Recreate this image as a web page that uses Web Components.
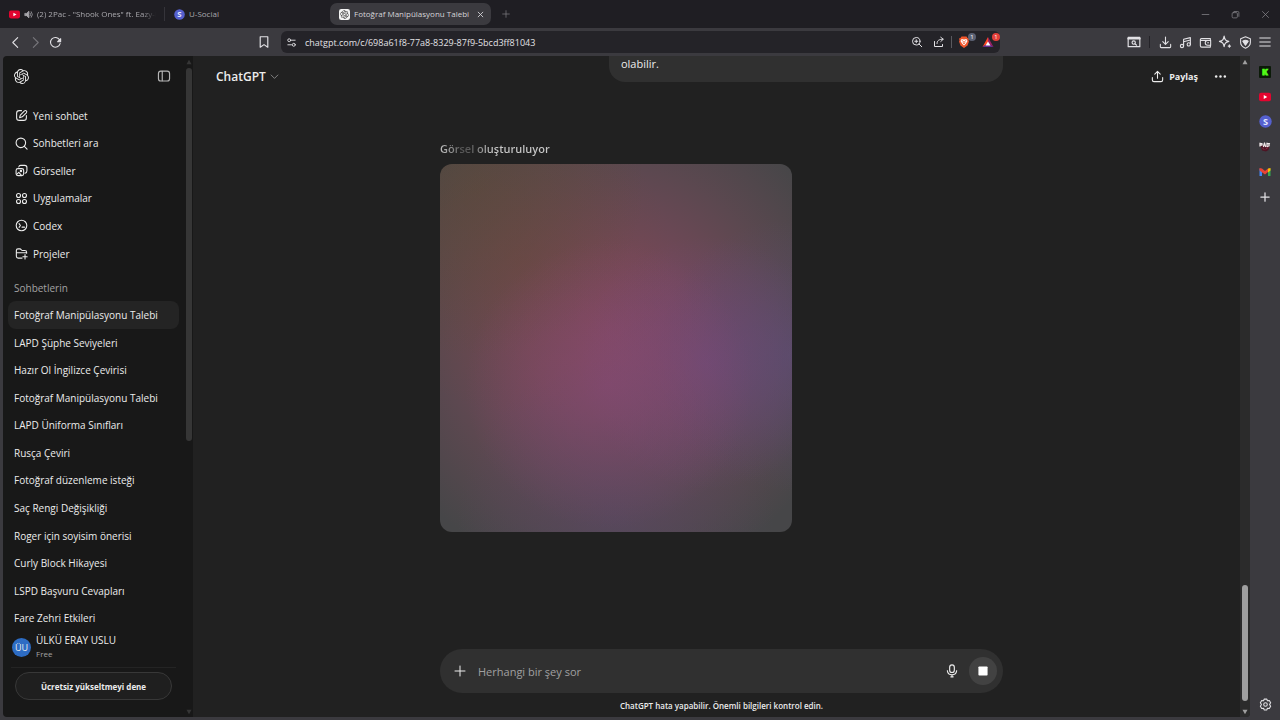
<!DOCTYPE html>
<html lang="tr">
<head>
<meta charset="utf-8">
<meta name="viewport" content="width=device-width, initial-scale=1">
<title>Fotoğraf Manipülasyonu Talebi</title>
<style>
	html, body {
		height: 100%;
		margin: 0;
	}

	body {
		background: #3b3a3f;
		color: #ececec;
		font-family: "Open Sans", "Noto Sans", sans-serif;
		font-size: 10px;
		overflow: hidden;
	}
</style>
</head>
<body>
<browser-window></browser-window>

<script>
const BASE = `
	* {
		box-sizing: border-box;
	}

	button, input, h2, p, hr {
		margin: 0;
		padding: 0;
	}

	button, input {
		font: inherit;
		color: inherit;
		background: none;
		border: 0;
		outline: 0;
	}

	a {
		color: inherit;
		text-decoration: none;
	}

	button {
		display: flex;
		align-items: center;
		justify-content: center;
	}
`;

const OPENAI = "M22.2819 9.8211a5.9847 5.9847 0 0 0-.5157-4.9108 6.0462 6.0462 0 0 0-6.5098-2.9A6.0651 6.0651 0 0 0 4.9807 4.1818a5.9847 5.9847 0 0 0-3.9977 2.9 6.0462 6.0462 0 0 0 .7427 7.0966 5.98 5.98 0 0 0 .511 4.9107 6.051 6.051 0 0 0 6.5146 2.9001A5.9847 5.9847 0 0 0 13.2599 24a6.0557 6.0557 0 0 0 5.7718-4.2058 5.9894 5.9894 0 0 0 3.9977-2.9001 6.0557 6.0557 0 0 0-.7475-7.0729zm-9.022 12.6081a4.4755 4.4755 0 0 1-2.8764-1.0408l.1419-.0804 4.7783-2.7582a.7948.7948 0 0 0 .3927-.6813v-6.7369l2.02 1.1686a.071.071 0 0 1 .038.052v5.5826a4.504 4.504 0 0 1-4.4945 4.4944zm-9.6607-4.1254a4.4708 4.4708 0 0 1-.5346-3.0137l.142.0852 4.783 2.7582a.7712.7712 0 0 0 .7806 0l5.8428-3.3685v2.3324a.0804.0804 0 0 1-.0332.0615L9.74 19.9502a4.4992 4.4992 0 0 1-6.1408-1.6464zM2.3408 7.8956a4.485 4.485 0 0 1 2.3655-1.9728V11.6a.7664.7664 0 0 0 .3879.6765l5.8144 3.3543-2.0201 1.1685a.0757.0757 0 0 1-.071 0l-4.8303-2.7865A4.504 4.504 0 0 1 2.3408 7.872zm16.5963 3.8558L13.1038 8.364 15.1192 7.2a.0757.0757 0 0 1 .071 0l4.8303 2.7913a4.4944 4.4944 0 0 1-.6765 8.1042v-5.6772a.79.79 0 0 0-.407-.667zm2.0107-3.0231l-.142-.0852-4.7735-2.7818a.7759.7759 0 0 0-.7854 0L9.409 9.2297V6.8974a.0662.0662 0 0 1 .0284-.0615l4.8303-2.7866a4.4992 4.4992 0 0 1 6.6802 4.66zM8.3065 12.863l-2.02-1.1638a.0804.0804 0 0 1-.038-.0567V6.0742a4.4992 4.4992 0 0 1 7.3757-3.4537l-.142.0805L8.704 5.459a.7948.7948 0 0 0-.3927.6813zm1.0976-2.3654l2.602-1.4998 2.6069 1.4998v2.9994l-2.5974 1.4997-2.6067-1.4997Z";

// all icons share a 24x24 box
const ICONS = {
	back: `<path d="M16 3 7 12l9 9"/>`,
	forward: `<path d="m8 3 9 9-9 9"/>`,
	reload: `<path d="M20.500 14a9 9 0 1 1-1-7"/><path d="M21.500 5v5.500h-5.500z" fill="currentColor"/>`,
	bookmark: `<path d="M5.500 3h13v18L12 16.500 5.500 21z"/>`,
	tune: `<circle cx="7" cy="7" r="3.200"/><path d="M12 7h8"/><circle cx="17" cy="17" r="3.200"/><path d="M4 17h8"/>`,
	zoom: `<circle cx="10.500" cy="10.500" r="7.500"/><path d="m16 16 5.500 5.500M10.500 7.500v6M7.500 10.500h6"/>`,
	send: `<path d="M3 11v10h16v-4M8 15c0-6 4-8.500 12-8.500M15.500 2.500l5 4-5 4.500"/>`,
	sidesearch: `<path d="M2 4h20v16H2z"/><path d="M2 6h20" stroke-width="3"/><circle cx="11.500" cy="13" r="2.800"/><path d="m14 15.500 2.500 2"/>`,
	download: `<path d="M12 2v13M7 10.500l5 5 5-5M2.500 15.500V20q0 1.500 1.500 1.500h16q1.500 0 1.500-1.500v-4.500"/>`,
	music: `<circle cx="5.500" cy="18.500" r="3"/><circle cx="18" cy="15.500" r="3"/><path d="M8.500 18.500V6L21 3v12.500M8.500 10.500 21 7.500"/>`,
	wallet: `<path d="M21 8V4.500H4.500a2 2 0 0 0-2 2V18a2.500 2.500 0 0 0 2.500 2.500h16V17M3 8h18.500v9H16a4.500 4.500 0 0 1 0-9M16 12.500h1.500"/>`,
	spark: `<path d="M10.500 2c1 6 2.500 7.500 8 9-5.500 1.500-7 3-8 9-1-6-2.500-7.500-8-9 5.500-1.500 7-3 8-9z"/><path d="M19.500 17v4M17.500 19h4"/>`,
	shield: `<path d="M12 1.500 21 5v7c0 5-4 8.500-9 10.500C7 20.500 3 17 3 12V5z"/><path d="M7 9.500q5-3.500 10 0L12 17z" fill="currentColor"/>`,
	menu: `<path d="M1.500 4h21M1.500 12h21M1.500 20h21"/>`,
	minimize: `<path d="M3 12h18"/>`,
	restore: `<rect x="3" y="7" width="14" height="14" rx="3"/><path d="M8 4h10q3 0 3 3v10"/>`,
	close: `<path d="m4 4 16 16M20 4 4 20"/>`,
	plus: `<path d="M12 2v20M2 12h20"/>`,
	speaker: `<path d="M3 9h4l6-6v18l-6-6H3z" fill="currentColor"/><path d="M16.500 8q3 4 0 8M19.500 4.500q6 7.500 0 15"/>`,
	chevron: `<path d="m3 8 9 9 9-9"/>`,
	panel: `<rect x="2.500" y="3.500" width="19" height="17" rx="4"/><path d="M9 4v16"/>`,
	compose: `<path d="M12 3H8a5 5 0 0 0-5 5v8a5 5 0 0 0 5 5h8a5 5 0 0 0 5-5v-4"/><path d="M17.500 3.500q2-1.500 3.500 0t0 3.500L13.500 14.500 8.500 16l1.300-4.800z"/>`,
	search: `<circle cx="10.800" cy="10.800" r="8.800"/><path d="m17.300 17.300 5 5"/>`,
	images: `<rect x="2" y="8.500" width="14" height="13" rx="3.500"/><path d="M7 5.500q.500-3 3.500-3H18q4 0 4 4v6q0 4-3.500 4.500M3 19l4-3.500 5 5.500"/><circle cx="11" cy="13" r="1.300"/>`,
	apps: `<circle cx="6.500" cy="6.500" r="3.700"/><circle cx="17.500" cy="6.500" r="3.700"/><circle cx="6.500" cy="17.500" r="3.700"/><circle cx="17.500" cy="17.500" r="3.700"/>`,
	codex: `<circle cx="12" cy="12" r="9.800"/><path d="m7.500 8.500 2.500 3.500-2.500 3.500M13 15h4.500"/>`,
	folder: `<path d="M13 20.500H6q-3.500 0-3.500-3.500V6.500Q2.500 3.500 5.500 3.500H9q1.500 0 2.500 1.500t2.500 1.500h4q3.500 0 3.500 3.500v1.500M2.500 10.500h18M18.500 14v8M14.500 18h8"/>`,
	share: `<path d="M12 15V2.500M7 7.500l5-5 5 5M2.500 14v4.500q0 3 3 3h13q3 0 3-3V14"/>`,
	dots: `<g fill="currentColor" stroke="none"><circle cx="4" cy="12" r="2.300"/><circle cx="12" cy="12" r="2.300"/><circle cx="20" cy="12" r="2.300"/></g>`,
	mic: `<rect x="8" y="1.500" width="8" height="13" rx="4"/><path d="M4 11.500q1 7 8 7t8-7M12 18.500V22M10 22h4"/>`,
	stop: `<rect x="1" y="1" width="22" height="22" rx="2" fill="currentColor" stroke="none"/>`,
	gear: `<path d="M9.500 2h5l1 3 3.500-.500 2.500 4.300L19.500 12l2 3.200-2.500 4.300-3.500-.500-1 3h-5l-1-3-3.500.500-2.500-4.300L4.500 12l-2-3.200L5 4.500l3.500.500z"/><circle cx="12" cy="12" r="3.300"/>`,
	up: `<path d="M12 3 22 21H2z" fill="currentColor" stroke="none"/>`,
	down: `<path d="M12 21 2 3h20z" fill="currentColor" stroke="none"/>`,
	openai: `<path d="${OPENAI}" fill="currentColor" stroke="none"/>`,
	openaitab: `<rect width="24" height="24" rx="5" fill="#f4f4f4" stroke="none"/><path transform="translate(3 3) scale(.75)" d="${OPENAI}" fill="#333" stroke="none"/>`,
	youtube: `<rect y="3.500" width="24" height="17" rx="4" fill="#e3042f" stroke="none"/><path d="m9.500 8 7 4-7 4z" fill="#fff" stroke="none"/>`,
	usocial: `<circle cx="12" cy="12" r="11.500" fill="#5560cf" stroke="none"/><text x="12" y="18" text-anchor="middle" font-size="17" font-weight="700" fill="#e6e9ff" stroke="none">S</text>`,
	kick: `<rect width="24" height="24" rx="2" fill="#0b1a08" stroke="none"/><text x="12" y="18" text-anchor="middle" font-size="17" font-weight="800" fill="#53fc18" stroke="#53fc18" stroke-width="1.500" stroke-linejoin="miter">K</text>`,
	forum: `<path d="M3 9h18l-2 9-5 3-8-2z" fill="#4e1424" stroke="none"/><path d="M2 4v6M2 5h4v3H2M9 11l2-7 2 7M16 4v7M16 5h5M20 5v5l-3 1" stroke="#f1e9ea" stroke-width="2.500"/><path d="m7 14 3 3M14 16l4-3" stroke="#8a3045"/>`,
	gmail: `<path d="M1 5v15h5V10z" fill="#4285f4" stroke="none"/><path d="M23 5v15h-5V10z" fill="#34a853" stroke="none"/><path d="m18 5 5-1v5l-5 4z" fill="#fbbc04" stroke="none"/><path d="m1 4 5 1 6 5 6-5v7l-6 5L1 9z" fill="#ea4335" stroke="none"/>`,
	brave: `<path d="M7 1h10l2 3 3 1-1 4 1 2-3 8-7 5-7-5-3-8 1-2-1-4 3-1z" fill="#f1562b" stroke="none"/><path d="m7 6 5 1 5-1 2 4-3 5-4 4-4-4-3-5z" fill="#fff" stroke="none"/><path d="m8 9 3 2-1 3 2 2 2-2-1-3 3-2" stroke="#f1562b" stroke-width="1.500"/>`,
	bat: `<path d="M12 2 1 22l11-7z" fill="#ff4724"/><path d="m12 2 11 20-11-7z" fill="#9e1f63"/><path d="m1 22 11-7 11 7z" fill="#662d91"/><path d="m12 11 5 8H7z" fill="#fff"/>`,
};

class UiIcon extends HTMLElement {
	connectedCallback() {
		const size = this.getAttribute("size") || 14;
		const weight = this.getAttribute("weight") || 2;
		this.attachShadow({mode: "open"}).innerHTML = `
		<style>
			:host {
				display: block;
				flex: none;
				width: ${size}px;
				height: ${size}px;
			}

			svg {
				display: block;
			}
		</style>
		<svg width="${size}" height="${size}" viewBox="0 0 24 24" fill="none" stroke="currentColor" stroke-width="${weight}" stroke-linecap="round" stroke-linejoin="round" aria-hidden="true">${ICONS[this.getAttribute("name")]}</svg>`;
	}
}

class BrowserTab extends HTMLElement {
	connectedCallback() {
		this.attachShadow({mode: "open"}).innerHTML = `
		<style>
			${BASE}
			:host {
				display: flex;
				align-items: center;
				gap: 4px;
				width: 165px;
				height: 22px;
				padding: 0 7px 0 9px;
				color: #a9a8ad;
				font-size: 8px;
				line-height: 14px;
				border-radius: 7px;
			}

			:host([active]) {
				width: 161px;
				color: #d5d4d8;
				background: #3b3a3f;
			}

			:host([divided]) {
				border-radius: 0;
			}

			.title {
				flex: 1;
				overflow: hidden;
				white-space: nowrap;
			}

			:host([divided]) .title {
				margin-right: 4px;
				-webkit-mask-image: linear-gradient(to right, #000 88%, transparent);
				mask-image: linear-gradient(to right, #000 88%, transparent);
			}

			.edge {
				width: 1px;
				height: 14px;
				margin-right: -7px;
				background: #35343a;
			}

			button {
				width: 8px;
			}
		</style>
		<slot name="icon"></slot>
		<span class="title"><slot></slot></span>
		${this.hasAttribute("divided") ? `<span class="edge"></span>` : ""}
		${this.hasAttribute("active") ? `<button aria-label="Sekmeyi kapat"><ui-icon name="close" size="7" weight="3"></ui-icon></button>` : ""}`;
	}
}

class TabStrip extends HTMLElement {
	connectedCallback() {
		this.attachShadow({mode: "open"}).innerHTML = `
		<style>
			${BASE}
			:host {
				display: flex;
				align-items: center;
				height: 28px;
				background: #1f1e23;
				color: #85848a;
			}

			button {
				width: 30px;
				height: 22px;
			}

			.controls {
				display: flex;
				margin-left: auto;
			}
		</style>
		<browser-tab divided>
			<ui-icon slot="icon" name="youtube" size="11"></ui-icon>
			<ui-icon slot="icon" name="speaker" size="9"></ui-icon>
			(2) 2Pac - "Shook Ones" ft. Eazy-E
		</browser-tab>
		<browser-tab>
			<ui-icon slot="icon" name="usocial" size="11"></ui-icon>
			U-Social
		</browser-tab>
		<browser-tab active>
			<ui-icon slot="icon" name="openaitab" size="11"></ui-icon>
			Fotoğraf Manipülasyonu Talebi
		</browser-tab>
		<button aria-label="Yeni sekme"><ui-icon name="plus" size="8"></ui-icon></button>
		<div class="controls">
			<button aria-label="Küçült"><ui-icon name="minimize" size="9"></ui-icon></button>
			<button aria-label="Geri yükle"><ui-icon name="restore" size="9"></ui-icon></button>
			<button aria-label="Kapat"><ui-icon name="close" size="9"></ui-icon></button>
		</div>`;
	}
}

class BrowserToolbar extends HTMLElement {
	connectedCallback() {
		this.attachShadow({mode: "open"}).innerHTML = `
		<style>
			${BASE}
			:host {
				display: flex;
				align-items: center;
				height: 28px;
				background: #3b3a3f;
				color: #e2e1e5;
			}

			button {
				flex: none;
				width: 20px;
				height: 20px;
			}

			.left, .right {
				display: flex;
				flex: 0 0 281px;
				align-items: center;
				padding: 0 7px 0 5px;
			}

			.left button:last-child {
				margin-left: auto;
			}

			.right {
				flex-basis: 280px;
				justify-content: flex-end;
				padding: 0 5px 0 0;
			}

			.dim {
				color: #77767b;
			}

			.address {
				display: flex;
				flex: 1;
				align-items: center;
				height: 22px;
				background: #242328;
				border-radius: 6px;
			}

			.address input {
				flex: 1;
				min-width: 0;
				height: 20px;
				margin-left: 4px;
				font-size: 9px;
			}

			.wide {
				width: 24px;
			}

			.divider {
				width: 1px;
				height: 12px;
				background: #5a595e;
			}

			.right .divider {
				margin: 0 5px;
				background: #242328;
			}

			.badged {
				position: relative;
			}

			.badged span {
				position: absolute;
				top: 1px;
				right: 0;
				width: 8px;
				height: 8px;
				border-radius: 4px;
				background: #5b6173;
				color: #fff;
				font-size: 6px;
				line-height: 8px;
				text-align: center;
			}

			.badged .red {
				background: #e5403a;
			}
		</style>
		<div class="left">
			<button aria-label="Geri"><ui-icon name="back" size="13"></ui-icon></button>
			<button class="dim" aria-label="İleri"><ui-icon name="forward" size="13"></ui-icon></button>
			<button aria-label="Yenile"><ui-icon name="reload" size="13"></ui-icon></button>
			<button aria-label="Yer imi"><ui-icon name="bookmark" size="14"></ui-icon></button>
		</div>
		<div class="address">
			<button aria-label="Site bilgileri"><ui-icon name="tune" size="11"></ui-icon></button>
			<input aria-label="Adres" value="chatgpt.com/c/698a61f8-77a8-8329-87f9-5bcd3ff81043">
			<button aria-label="Yakınlaştır"><ui-icon name="zoom" size="12"></ui-icon></button>
			<button class="wide" aria-label="Paylaş"><ui-icon name="send" size="12"></ui-icon></button>
			<span class="divider"></span>
			<button class="wide badged" aria-label="Kalkanlar"><ui-icon name="brave" size="12"></ui-icon><span>1</span></button>
			<button class="wide badged" aria-label="Ödüller"><ui-icon name="bat" size="12" weight="0"></ui-icon><span class="red">1</span></button>
		</div>
		<div class="right">
			<button aria-label="Sayfada ara"><ui-icon name="sidesearch" size="14"></ui-icon></button>
			<span class="divider"></span>
			<button aria-label="İndirilenler"><ui-icon name="download" size="13"></ui-icon></button>
			<button aria-label="Müzik"><ui-icon name="music" size="13"></ui-icon></button>
			<button aria-label="Cüzdan"><ui-icon name="wallet" size="13"></ui-icon></button>
			<button aria-label="Leo"><ui-icon name="spark" size="14"></ui-icon></button>
			<button aria-label="VPN"><ui-icon name="shield" size="13"></ui-icon></button>
			<button aria-label="Menü"><ui-icon name="menu" size="12"></ui-icon></button>
		</div>`;
	}
}

class ScrollTrack extends HTMLElement {
	connectedCallback() {
		this.attachShadow({mode: "open"}).innerHTML = `
		<style>
			:host {
				display: flex;
				flex-direction: column;
				align-items: center;
				padding: 3px 0 2px;
			}

			.track {
				display: flex;
				flex: 1;
				flex-direction: column;
				width: 6px;
				margin: 3px 0;
			}

			.before {
				flex: var(--before, 0);
			}

			.thumb {
				flex: var(--thumb, 1);
				background: currentColor;
				border-radius: 3px;
			}

			.after {
				flex: var(--after, 0);
			}
		</style>
		<ui-icon name="up" size="6"></ui-icon>
		<div class="track">
			<div class="before"></div>
			<div class="thumb"></div>
			<div class="after"></div>
		</div>
		<ui-icon name="down" size="6"></ui-icon>`;
	}
}

class NavItem extends HTMLElement {
	connectedCallback() {
		this.attachShadow({mode: "open"}).innerHTML = `
		<style>
			${BASE}
			:host {
				display: flex;
			}

			a {
				display: flex;
				flex: 1;
				align-items: center;
				gap: 5px;
				padding: 0 6px 0 7px;
			}
		</style>
		<a href="#"><ui-icon name="${this.getAttribute("icon")}" size="13"></ui-icon><span><slot></slot></span></a>`;
	}
}

class ChatLink extends HTMLElement {
	connectedCallback() {
		this.attachShadow({mode: "open"}).innerHTML = `
		<style>
			${BASE}
			:host {
				display: flex;
				border-radius: 8px;
			}

			:host([current]) {
				background: #242424;
			}

			a {
				flex: 1;
				align-self: center;
				padding: 0 6px;
				white-space: nowrap;
			}
		</style>
		<a href="#"><slot></slot></a>`;
	}
}

const NAV = [
	["compose", "Yeni sohbet"],
	["search", "Sohbetleri ara"],
	["images", "Görseller"],
	["apps", "Uygulamalar"],
	["codex", "Codex"],
	["folder", "Projeler"],
];

const CHATS = [
	"Fotoğraf Manipülasyonu Talebi",
	"LAPD Şüphe Seviyeleri",
	"Hazır Ol İngilizce Çevirisi",
	"Fotoğraf Manipülasyonu Talebi",
	"LAPD Üniforma Sınıfları",
	"Rusça Çeviri",
	"Fotoğraf düzenleme isteği",
	"Saç Rengi Değişikliği",
	"Roger için soyisim önerisi",
	"Curly Block Hikayesi",
	"LSPD Başvuru Cevapları",
	"Fare Zehri Etkileri",
];

class ChatSidebar extends HTMLElement {
	connectedCallback() {
		this.attachShadow({mode: "open"}).innerHTML = `
		<style>
			${BASE}
			:host {
				display: flex;
				width: 190px;
				background: #181818;
				border-radius: 4px 0 0 4px;
			}

			.body {
				display: flex;
				flex: 1;
				flex-direction: column;
				min-width: 0;
			}

			header {
				display: flex;
				align-items: center;
				justify-content: space-between;
				height: 40px;
				padding: 0 13px 0 11px;
			}

			header button {
				color: #b4b4b4;
			}

			nav {
				display: grid;
				padding: 0 5px;
			}

			/* six shortcuts and twelve chats share one row pitch */
			.shortcuts {
				flex: 6 1 0;
				margin-top: 6px;
			}

			.chats {
				flex: 12 1 0;
			}

			h2 {
				height: 34px;
				padding: 11px 11px 0;
				color: #a3a3a3;
				font-size: 10px;
				font-weight: 400;
				line-height: 20px;
			}

			footer {
				height: 85px;
				padding: 0 8px;
			}

			.account {
				display: flex;
				width: 100%;
				height: 30px;
				justify-content: flex-start;
				gap: 5px;
				padding-left: 1px;
				margin-bottom: 5px;
				border-radius: 6px;
				text-align: left;
			}

			.avatar {
				width: 19px;
				height: 19px;
				border-radius: 50%;
				background: #2d6cc4;
				font-size: 9px;
				line-height: 19px;
				text-align: center;
			}

			.account strong, .account small {
				display: block;
				font-size: 10px;
				font-weight: 400;
				line-height: 14px;
			}

			.account small {
				color: #a3a3a3;
				font-size: 8px;
			}

			.upgrade {
				width: 157px;
				height: 28px;
				margin: 4px 4px 0;
				border: 1px solid #383838;
				border-radius: 14px;
				background: #1f1f1f;
				font-size: 8px;
				font-weight: 700;
			}

			hr {
				border: 0;
				border-top: 1px solid #242424;
			}

			scroll-track {
				width: 9px;
				color: #363636;
				--thumb: 373;
				--after: 265;
			}
		</style>
		<div class="body">
			<header>
				<a href="#" aria-label="ChatGPT"><ui-icon name="openai" size="15"></ui-icon></a>
				<button aria-label="Kenar çubuğunu kapat"><ui-icon name="panel" size="14"></ui-icon></button>
			</header>
			<nav class="shortcuts">
				${NAV.map(([icon, label]) => `<nav-item icon="${icon}">${label}</nav-item>`).join("")}
			</nav>
			<h2>Sohbetlerin</h2>
			<nav class="chats">
				${CHATS.map((title, i) => `<chat-link ${i === 0 ? "current" : ""}>${title}</chat-link>`).join("")}
			</nav>
			<footer>
				<button class="account">
					<span class="avatar">ÜU</span>
					<span><strong>ÜLKÜ ERAY USLU</strong><small>Free</small></span>
				</button>
				<hr>
				<button class="upgrade">Ücretsiz yükseltmeyi dene</button>
			</footer>
		</div>
		<scroll-track></scroll-track>`;
	}
}

class PromptBox extends HTMLElement {
	connectedCallback() {
		this.attachShadow({mode: "open"}).innerHTML = `
		<style>
			${BASE}
			:host {
				display: flex;
				align-items: center;
				height: 44px;
				padding: 0 6px;
				background: #303030;
				border-radius: 22px;
				font-size: 11px;
			}

			button {
				width: 28px;
				height: 28px;
				border-radius: 14px;
			}

			input {
				flex: 1;
				min-width: 0;
				height: 28px;
				margin-left: 4px;
			}

			input::placeholder {
				color: #a0a0a0;
			}

			.stop {
				margin-left: 3px;
				background: #424242;
				color: #fff;
			}
		</style>
		<button aria-label="Ekle"><ui-icon name="plus" size="12"></ui-icon></button>
		<input aria-label="Mesaj" placeholder="Herhangi bir şey sor">
		<button aria-label="Dikte"><ui-icon name="mic" size="14"></ui-icon></button>
		<button class="stop" aria-label="Durdur"><ui-icon name="stop" size="10"></ui-icon></button>`;
	}
}

class ChatView extends HTMLElement {
	connectedCallback() {
		this.attachShadow({mode: "open"}).innerHTML = `
		<style>
			${BASE}
			:host {
				display: flex;
				position: relative;
				flex: 1;
				min-width: 0;
				background: #212121;
				border-radius: 0 0 4px 0;
				overflow: hidden;
			}

			header {
				display: flex;
				position: absolute;
				top: 0;
				left: 0;
				right: 10px;
				align-items: center;
				justify-content: space-between;
				height: 40px;
				padding: 0 13px 0 23px;
			}

			.model {
				gap: 4px;
				font-size: 12px;
				font-weight: 600;
			}

			.model ui-icon {
				color: #a3a3a3;
			}

			.actions {
				display: flex;
				gap: 16px;
			}

			.actions button {
				gap: 5px;
				font-size: 9px;
				font-weight: 700;
			}

			.column {
				display: flex;
				flex: 1;
				flex-direction: column;
				max-width: 563px;
				margin: 0 auto;
			}

			.bubble {
				align-self: flex-end;
				width: 70%;
				height: 26px;
				padding: 0 12px;
				background: #303030;
				border-radius: 0 0 16px 16px;
				font-size: 11px;
				line-height: 15px;
			}

			.status {
				align-self: flex-start;
				margin: 58px 0 6px;
				font-size: 11px;
				font-weight: 600;
				line-height: 18px;
				background: linear-gradient(to right, #c0c0c0, #8a8a8a 12%, #555 20%, #5c5c5c 28%, #8a8a8a 36%, #c8c8c8 48%);
				-webkit-background-clip: text;
				background-clip: text;
				color: transparent;
			}

			.preview {
				width: 352px;
				height: 368px;
				border-radius: 12px;
				background:
					radial-gradient(circle at 48% 60%, #864a74a0 0, #864a7400 50%),
					radial-gradient(circle at 76% 54%, #704a8290 0, #704a8200 38%),
					radial-gradient(circle at 22% 26%, #6c483860 0, #6c483800 40%),
					radial-gradient(circle at 10% 6%, #5a4a3890 0, #5a4a3800 36%),
					radial-gradient(circle at 100% 52%, #584e7890 0, #584e7800 34%),
					radial-gradient(circle at 50% 96%, #584864a0 0, #58486400 40%),
					radial-gradient(circle at 48% 46%, #824860 0, #744858 30%, #5c4850 62%, #464648 92%);
			}

			prompt-box {
				margin-top: auto;
			}

			.note {
				padding: 5px 0 3px;
				font-size: 8px;
				font-weight: 600;
				line-height: 16px;
				text-align: center;
			}

			scroll-track {
				position: absolute;
				top: 0;
				bottom: 0;
				right: 0;
				width: 10px;
				background: #2b2b2b;
				color: #9f9f9f;
				--before: 517;
				--thumb: 116;
				--after: 5;
			}
		</style>
		<div class="column">
			<div class="bubble">olabilir.</div>
			<p class="status">Görsel oluşturuluyor</p>
			<div class="preview" role="img" aria-label="Görsel oluşturuluyor"></div>
			<prompt-box></prompt-box>
			<p class="note">ChatGPT hata yapabilir. Önemli bilgileri kontrol edin.</p>
		</div>
		<header>
			<button class="model">ChatGPT <ui-icon name="chevron" size="9"></ui-icon></button>
			<div class="actions">
				<button><ui-icon name="share" size="13"></ui-icon>Paylaş</button>
				<button aria-label="Diğer"><ui-icon name="dots" size="13"></ui-icon></button>
			</div>
		</header>
		<scroll-track></scroll-track>`;
	}
}

class SideRail extends HTMLElement {
	connectedCallback() {
		this.attachShadow({mode: "open"}).innerHTML = `
		<style>
			${BASE}
			:host {
				display: flex;
				flex-direction: column;
				align-items: center;
				width: 30px;
				padding-top: 3px;
				color: #e2e1e5;
			}

			button, a {
				display: flex;
				align-items: center;
				justify-content: center;
				width: 30px;
				height: 25px;
			}

			button:last-child {
				margin-top: auto;
			}
		</style>
		<a href="#" aria-label="Kick"><ui-icon name="kick" size="12"></ui-icon></a>
		<a href="#" aria-label="YouTube"><ui-icon name="youtube" size="12"></ui-icon></a>
		<a href="#" aria-label="U-Social"><ui-icon name="usocial" size="13"></ui-icon></a>
		<a href="#" aria-label="Forum"><ui-icon name="forum" size="12"></ui-icon></a>
		<a href="#" aria-label="Gmail"><ui-icon name="gmail" size="12"></ui-icon></a>
		<button aria-label="Ekle"><ui-icon name="plus" size="10" weight="3"></ui-icon></button>
		<button aria-label="Ayarlar"><ui-icon name="gear" size="13"></ui-icon></button>`;
	}
}

class BrowserWindow extends HTMLElement {
	connectedCallback() {
		this.attachShadow({mode: "open"}).innerHTML = `
		<style>
			:host {
				display: flex;
				flex-direction: column;
				height: 100vh;
			}

			.content {
				display: flex;
				flex: 1;
				min-height: 0;
				padding: 0 0 3px 3px;
			}
		</style>
		<tab-strip></tab-strip>
		<browser-toolbar></browser-toolbar>
		<div class="content">
			<chat-sidebar></chat-sidebar>
			<chat-view></chat-view>
			<side-rail></side-rail>
		</div>`;
	}
}

customElements.define("ui-icon", UiIcon);
customElements.define("browser-tab", BrowserTab);
customElements.define("tab-strip", TabStrip);
customElements.define("browser-toolbar", BrowserToolbar);
customElements.define("scroll-track", ScrollTrack);
customElements.define("nav-item", NavItem);
customElements.define("chat-link", ChatLink);
customElements.define("chat-sidebar", ChatSidebar);
customElements.define("prompt-box", PromptBox);
customElements.define("chat-view", ChatView);
customElements.define("side-rail", SideRail);
customElements.define("browser-window", BrowserWindow);
</script>
</body>
</html>
